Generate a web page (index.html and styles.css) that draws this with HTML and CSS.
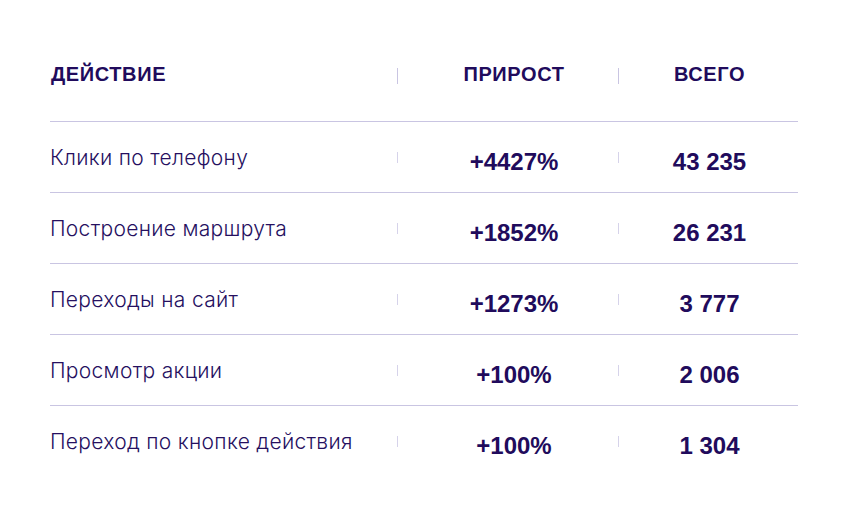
FILE: index.html
```html
<!DOCTYPE html>
<html lang="ru">
<head>
<meta charset="utf-8">
<link rel="stylesheet" href="styles.css">
</head>
<body>
<div class="table">
  <div class="row head">
    <div class="cell label">ДЕЙСТВИЕ</div>
    <span class="tick"></span>
    <div class="cell num">ПРИРОСТ</div>
    <span class="tick"></span>
    <div class="cell total">ВСЕГО</div>
  </div>
  <div class="row">
    <div class="cell label">Клики по телефону</div>
    <span class="tick"></span>
    <div class="cell num">+4427%</div>
    <span class="tick"></span>
    <div class="cell total">43 235</div>
  </div>
  <div class="row">
    <div class="cell label">Построение маршрута</div>
    <span class="tick"></span>
    <div class="cell num">+1852%</div>
    <span class="tick"></span>
    <div class="cell total">26 231</div>
  </div>
  <div class="row">
    <div class="cell label">Переходы на сайт</div>
    <span class="tick"></span>
    <div class="cell num">+1273%</div>
    <span class="tick"></span>
    <div class="cell total">3 777</div>
  </div>
  <div class="row">
    <div class="cell label">Просмотр акции</div>
    <span class="tick"></span>
    <div class="cell num">+100%</div>
    <span class="tick"></span>
    <div class="cell total">2 006</div>
  </div>
  <div class="row last">
    <div class="cell label">Переход по кнопке действия</div>
    <span class="tick"></span>
    <div class="cell num">+100%</div>
    <span class="tick"></span>
    <div class="cell total">1 304</div>
  </div>
</div>
</body>
</html>
```

FILE: styles.css
```css
html, body {
  margin: 0;
  padding: 0;
  background: #ffffff;
}

body {
  width: 849px;
  height: 513px;
  overflow: hidden;
  color: #210b5c;
  font-family: "Liberation Sans", Arial, sans-serif;
}

.table {
  width: 748px;
  margin-left: 50px;
  padding-top: 28px;
}

.row {
  display: grid;
  grid-template-columns: 347px 1px 1fr 1px 179px;
  align-items: center;
  height: 70px;
  border-bottom: 1px solid #c9c5e2;
}

.row.last {
  border-bottom: none;
}

.row.head {
  height: 93px;
}

.cell {
  white-space: nowrap;
}

.label {
  font-family: Inter, "Liberation Sans", sans-serif;
  font-weight: 300;
  font-size: 21px;
  letter-spacing: 0.3px;
  color: #26105f;
}

.num, .total {
  font-weight: 700;
  font-size: 24px;
  text-align: center;
  padding-top: 9px;
}

.num {
  padding-left: 12px;
}

.total {
  padding-left: 2px;
}

.tick {
  display: block;
  width: 1px;
  height: 11px;
  background: #d6d3ea;
}

.head .cell {
  font-family: "Liberation Sans", Arial, sans-serif;
  font-weight: 700;
  font-size: 20px;
  letter-spacing: 0.6px;
  padding-top: 0;
  color: #210b5c;
}

.head .label {
  margin-left: 1px;
}

.head .tick {
  height: 16px;
  background: #c9c5e2;
  margin-top: 2px;
}
```
